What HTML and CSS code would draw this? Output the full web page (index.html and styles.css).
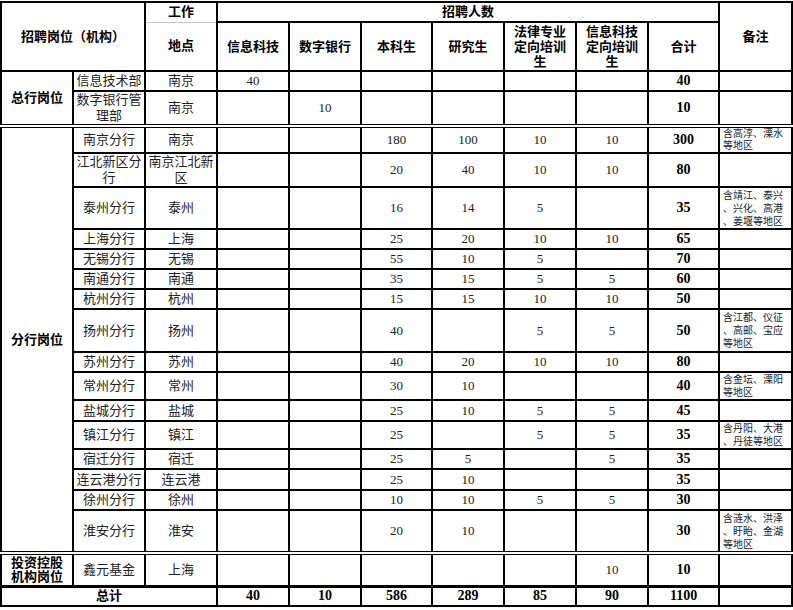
FILE: index.html
```html
<!DOCTYPE html>
<html lang="zh-CN">
<head>
<meta charset="utf-8">
<title>招聘岗位</title>
<link rel="stylesheet" href="styles.css">
</head>
<body>
<table class="grid">
<colgroup>
<col class="w72"><col class="w72"><col class="w72"><col class="w72"><col class="w72"><col class="w71"><col class="w72"><col class="w72"><col class="w72"><col class="w71"><col class="w73">
</colgroup>
<thead>
<tr class="h20">
<th colspan="2" rowspan="2">招聘岗位（机构）</th>
<th class="work">工作</th>
<th colspan="7">招聘人数</th>
<th rowspan="2">备注</th>
</tr>
<tr class="h49">
<th class="place">地点</th>
<th>信息科技</th>
<th>数字银行</th>
<th>本科生</th>
<th>研究生</th>
<th class="ml">法律专业<br>定向培训<br>生</th>
<th class="ml">信息科技<br>定向培训<br>生</th>
<th>合计</th>
</tr>
</thead>
<tbody>
<tr class="h20">
<td rowspan="2" class="cat">总行岗位</td>
<td>信息技术部</td><td>南京</td><td>40</td><td></td><td></td><td></td><td></td><td></td><td class="sum">40</td><td class="note"></td>
</tr>
<tr class="h34">
<td>数字银行管<br>理部</td><td>南京</td><td></td><td>10</td><td></td><td></td><td></td><td></td><td class="sum">10</td><td class="note"></td>
</tr>
<tr class="h27 dbl">
<td rowspan="16" class="cat">分行岗位</td>
<td>南京分行</td><td>南京</td><td></td><td></td><td>180</td><td>100</td><td>10</td><td>10</td><td class="sum">300</td><td class="note tight">含高淳、溧水<br>等地区</td>
</tr>
<tr class="h34">
<td>江北新区分<br>行</td><td>南京江北新<br>区</td><td></td><td></td><td>20</td><td>40</td><td>10</td><td>10</td><td class="sum">80</td><td class="note"></td>
</tr>
<tr class="h42">
<td>泰州分行</td><td>泰州</td><td></td><td></td><td>16</td><td>14</td><td>5</td><td></td><td class="sum">35</td><td class="note">含靖江、泰兴<br>、兴化、高港<br>、姜堰等地区</td>
</tr>
<tr class="h20">
<td>上海分行</td><td>上海</td><td></td><td></td><td>25</td><td>20</td><td>10</td><td>10</td><td class="sum">65</td><td class="note"></td>
</tr>
<tr class="h20">
<td>无锡分行</td><td>无锡</td><td></td><td></td><td>55</td><td>10</td><td>5</td><td></td><td class="sum">70</td><td class="note"></td>
</tr>
<tr class="h20">
<td>南通分行</td><td>南通</td><td></td><td></td><td>35</td><td>15</td><td>5</td><td>5</td><td class="sum">60</td><td class="note"></td>
</tr>
<tr class="h20">
<td>杭州分行</td><td>杭州</td><td></td><td></td><td>15</td><td>15</td><td>10</td><td>10</td><td class="sum">50</td><td class="note"></td>
</tr>
<tr class="h43">
<td>扬州分行</td><td>扬州</td><td></td><td></td><td>40</td><td></td><td>5</td><td>5</td><td class="sum">50</td><td class="note">含江都、仪征<br>、高邮、宝应<br>等地区</td>
</tr>
<tr class="h20">
<td>苏州分行</td><td>苏州</td><td></td><td></td><td>40</td><td>20</td><td>10</td><td>10</td><td class="sum">80</td><td class="note"></td>
</tr>
<tr class="h28">
<td>常州分行</td><td>常州</td><td></td><td></td><td>30</td><td>10</td><td></td><td></td><td class="sum">40</td><td class="note">含金坛、溧阳<br>等地区</td>
</tr>
<tr class="h21">
<td>盐城分行</td><td>盐城</td><td></td><td></td><td>25</td><td>10</td><td>5</td><td>5</td><td class="sum">45</td><td class="note"></td>
</tr>
<tr class="h28">
<td>镇江分行</td><td>镇江</td><td></td><td></td><td>25</td><td></td><td>5</td><td>5</td><td class="sum">35</td><td class="note">含丹阳、大港<br>、丹徒等地区</td>
</tr>
<tr class="h20">
<td>宿迁分行</td><td>宿迁</td><td></td><td></td><td>25</td><td>5</td><td></td><td>5</td><td class="sum">35</td><td class="note"></td>
</tr>
<tr class="h21">
<td>连云港分行</td><td>连云港</td><td></td><td></td><td>25</td><td>10</td><td></td><td></td><td class="sum">35</td><td class="note"></td>
</tr>
<tr class="h20">
<td>徐州分行</td><td>徐州</td><td></td><td></td><td>10</td><td>10</td><td>5</td><td>5</td><td class="sum">30</td><td class="note"></td>
</tr>
<tr class="h43">
<td>淮安分行</td><td>淮安</td><td></td><td></td><td>20</td><td>10</td><td></td><td></td><td class="sum">30</td><td class="note">含涟水、洪泽<br>、盱眙、金湖<br>等地区</td>
</tr>
<tr class="h33 dbl">
<td class="cat two">投资控股<br>机构岗位</td>
<td>鑫元基金</td><td>上海</td><td></td><td></td><td></td><td></td><td></td><td>10</td><td class="sum">10</td><td class="note"></td>
</tr>
<tr class="h20 total">
<td colspan="3" class="cat">总计</td>
<td class="sum">40</td><td class="sum">10</td><td class="sum">586</td><td class="sum">289</td><td class="sum">85</td><td class="sum">90</td><td class="sum">1100</td><td class="note"></td>
</tr>
</tbody>
</table>
</body>
</html>
```

FILE: styles.css
```css
html, body {
  margin: 0;
  padding: 0;
  background: #fff;
}

body {
  font-family: "Liberation Serif", "Noto Sans CJK SC", serif;
  padding-top: 1px;
}

.grid {
  border-collapse: collapse;
  table-layout: fixed;
  width: 791px;
}

.w71 { width: 71px; }
.w72 { width: 72px; }
.w73 { width: 73px; }

.grid th,
.grid td {
  border: 2px solid #000;
  padding: 0 2px;
  text-align: center;
  vertical-align: middle;
  white-space: nowrap;
  font-size: 13px;
  line-height: 16px;
  color: #222;
  font-weight: normal;
  overflow: hidden;
}

.grid th {
  font-weight: bold;
  color: #000;
}

.grid th.ml {
  line-height: 15px;
}

.grid th.work {
  border-bottom: 1px solid #c4c4c4;
}

.grid th.place {
  border-top: 1px solid #c4c4c4;
}

.grid td.cat {
  font-weight: bold;
  color: #000;
}

.grid td.cat.two {
  line-height: 14px;
}

.grid td.sum {
  font-weight: bold;
  font-size: 14px;
  color: #000;
}

.grid td.note {
  text-align: left;
  font-size: 10px;
  line-height: 13px;
  padding: 0 2px 0 3px;
  color: #222;
}

.grid td.note.tight {
  line-height: 12px;
}

.grid tr.dbl td {
  border-top: 4px double #000;
}

.grid tr.total td {
  border-top: 3px solid #000;
}

.h20 { height: 20px; }
.h21 { height: 21px; }
.h27 { height: 27px; }
.h28 { height: 28px; }
.h33 { height: 33px; }
.h34 { height: 34px; }
.h42 { height: 42px; }
.h43 { height: 43px; }
.h49 { height: 49px; }
```
